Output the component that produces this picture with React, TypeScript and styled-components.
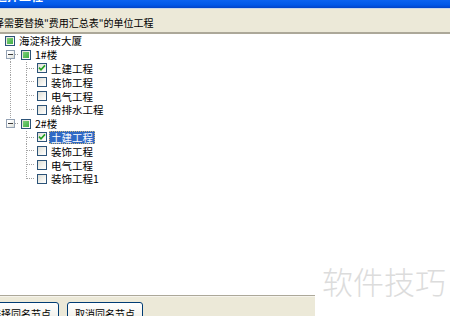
import * as React from "react";
import styled, { createGlobalStyle } from "styled-components";

type CheckState = "checked" | "unchecked" | "partial";

interface TreeNode {
  label: string;
  state: CheckState;
  selected?: boolean;
  children?: TreeNode[];
}

interface FlatRow {
  node: TreeNode;
  level: number;
  isLast: boolean;
  isFirst: boolean;
  // one flag per ancestor column: does the line in that column go on?
  continues: boolean[];
}

const TREE: TreeNode = {
  label: "海淀科技大厦",
  state: "partial",
  children: [
    {
      label: "1#楼",
      state: "partial",
      children: [
        { label: "土建工程", state: "checked" },
        { label: "装饰工程", state: "unchecked" },
        { label: "电气工程", state: "unchecked" },
        { label: "给排水工程", state: "unchecked" },
      ],
    },
    {
      label: "2#楼",
      state: "partial",
      children: [
        { label: "土建工程", state: "checked", selected: true },
        { label: "装饰工程", state: "unchecked" },
        { label: "电气工程", state: "unchecked" },
        { label: "装饰工程1", state: "unchecked" },
      ],
    },
  ],
};

const GlobalStyle = createGlobalStyle`
  html, body {
    margin: 0;
    padding: 0;
    background: #ffffff;
  }
  body {
    font-family: "Noto Sans CJK SC", "DejaVu Sans", sans-serif;
  }
`;

const Window = styled.div`
  position: relative;
  width: 450px;
  height: 316px;
  display: flex;
  flex-direction: column;
  overflow: hidden;
  background: #ffffff;
`;

const TitleBar = styled.div`
  height: 8px;
  flex: none;
  display: flex;
  align-items: flex-end;
  overflow: hidden;
  background: linear-gradient(180deg, #0a62f0 0%, #0058e8 60%, #0043c8 100%);
  border-bottom: 1px solid #c9d6e6;
`;

const TitleText = styled.span`
  margin: 0 0 6px -5px;
  color: #ffffff;
  font-size: 12px;
  font-weight: 700;
  line-height: 13px;
  white-space: nowrap;
`;

const Header = styled.div`
  height: 25px;
  flex: none;
  display: flex;
  align-items: center;
  padding-top: 1px;
  box-sizing: border-box;
  background: #ece9d8;
  border-bottom: 2px solid #aca899;
  font-size: 10px;
  line-height: 12px;
  color: #000000;
  white-space: nowrap;
  overflow: hidden;
`;

const HeaderText = styled.span`
  margin-left: -16px;
  margin-top: 3px;
`;

const TreePanel = styled.div`
  flex: 1;
  padding-left: 2px;
  background: #ffffff;
`;

const Row = styled.div`
  height: 13.8px;
  display: flex;
  align-items: center;
  font-size: 10.5px;
  line-height: 13px;
  color: #000000;
  white-space: nowrap;
`;

const Cell = styled.span`
  position: relative;
  width: 16px;
  height: 100%;
  flex: none;
  display: flex;
  align-items: center;
  justify-content: center;
`;

const Guides = styled.svg`
  position: absolute;
  left: 0;
  top: 0;
  width: 16px;
  height: 100%;
  overflow: visible;
`;

const Expander = styled.span`
  position: relative;
  width: 9px;
  height: 9px;
  box-sizing: border-box;
  border: 1px solid #94a2b4;
  background: linear-gradient(135deg, #ffffff 30%, #d9dcd6 100%);
  display: flex;
  align-items: center;
  justify-content: center;
  &::after {
    content: "";
    width: 5px;
    height: 1px;
    background: #3a3a3a;
  }
`;

const Box = styled.span<{ $state: CheckState }>`
  position: relative;
  width: 10px;
  height: 10px;
  box-sizing: border-box;
  border: 1px solid #2c5378;
  background: linear-gradient(135deg, #dcdcd4 0%, #f4f4f0 60%, #ffffff 100%);
  display: flex;
  align-items: center;
  justify-content: center;
  ${(p) =>
    p.$state === "partial"
      ? `
    &::after {
      content: "";
      width: 6px;
      height: 6px;
      background: linear-gradient(135deg, #7ed07a 0%, #3fae45 100%);
    }
  `
      : ``}
`;

const Label = styled.span<{ $selected: boolean }>`
  padding: 0 2px;
  margin-left: -1px;
  ${(p) =>
    p.$selected
      ? `
    background: #316ac5;
    color: #ffffff;
    outline: 1px dotted #c9b27a;
    outline-offset: -1px;
  `
      : ``}
`;

const Footer = styled.div`
  height: 21px;
  flex: none;
  box-sizing: border-box;
  display: flex;
  gap: 8px;
  padding-top: 6px;
  background: #ece9d8;
  border-top: 1px solid #aca899;
  box-shadow: inset 0 1px 0 #f6f4ec;
  overflow: hidden;
`;

const Button = styled.button<{ $cut?: boolean }>`
  width: 76px;
  height: 23px;
  flex: none;
  margin-left: ${(p) => (p.$cut ? "-17px" : "0")};
  padding: 0;
  border: 1px solid #003c74;
  border-radius: 3px;
  background: linear-gradient(180deg, #ffffff 0%, #f5f4ef 55%, #e3e0d3 100%);
  font-family: "Noto Sans CJK SC", "DejaVu Sans", sans-serif;
  font-size: 10px;
  line-height: 13px;
  color: #000000;
  text-align: center;
`;

const Watermark = styled.div`
  position: absolute;
  right: 0;
  bottom: 0;
  width: 135px;
  height: 60px;
  box-sizing: border-box;
  padding: 9px 0 0 7px;
  background: #ffffff;
  color: #dcdcdc;
  font-size: 31px;
  font-weight: 300;
  line-height: 31px;
  white-space: nowrap;
`;

function flatten(node: TreeNode, level: number, isFirst: boolean, isLast: boolean, continues: boolean[], out: FlatRow[]) {
  out.push({ node, level, isFirst, isLast, continues });
  const kids = node.children || [];
  kids.forEach((child, i) => {
    const next = level === 0 ? [] : [...continues, !isLast];
    flatten(child, level + 1, i === 0, i === kids.length - 1, next, out);
  });
}

const dot = { stroke: "#a3a3a3", strokeWidth: 1, strokeDasharray: "1 1", shapeRendering: "crispEdges" as const };

function Connector({ row }: { row: FlatRow }) {
  const hasKids = !!row.node.children;
  // the top-level items have no line running up to the root
  const fromTop = !(row.level === 1 && row.isFirst);
  return (
    <Cell>
      <Guides>
        <line x1="8.5" y1={fromTop ? "0" : "50%"} x2="8.5" y2={row.isLast ? "50%" : "100%"} {...dot} />
        <line x1="8.5" y1="50%" x2="16" y2="50%" {...dot} />
      </Guides>
      {hasKids && <Expander />}
    </Cell>
  );
}

function Check({ state }: { state: CheckState }) {
  return (
    <Cell>
      <Box $state={state}>
        {state === "checked" && (
          <svg width="8" height="8" viewBox="0 0 8 8">
            <path d="M1 3.6 L3 5.8 L7 1.4" fill="none" stroke="#21a121" strokeWidth="1.6" />
          </svg>
        )}
      </Box>
    </Cell>
  );
}

export default function App() {
  const rows: FlatRow[] = [];
  flatten(TREE, 0, true, true, [], rows);

  return (
    <>
      <GlobalStyle />
      <Window>
        <TitleBar>
          <TitleText>选择工程</TitleText>
        </TitleBar>
        <Header>
          <HeaderText>选择需要替换"费用汇总表"的单位工程</HeaderText>
        </Header>
        <TreePanel>
          {rows.map((r, i) => (
            <Row key={i}>
              {r.continues.map((c, j) => (
                <Cell key={j}>
                  {c && (
                    <Guides>
                      <line x1="8.5" y1="0" x2="8.5" y2="100%" {...dot} />
                    </Guides>
                  )}
                </Cell>
              ))}
              {r.level > 0 && <Connector row={r} />}
              <Check state={r.node.state} />
              <Label $selected={!!r.node.selected}>{r.node.label}</Label>
            </Row>
          ))}
        </TreePanel>
        <Footer>
          <Button $cut>选择同名节点</Button>
          <Button>取消同名节点</Button>
        </Footer>
        <Watermark>软件技巧</Watermark>
      </Window>
    </>
  );
}
